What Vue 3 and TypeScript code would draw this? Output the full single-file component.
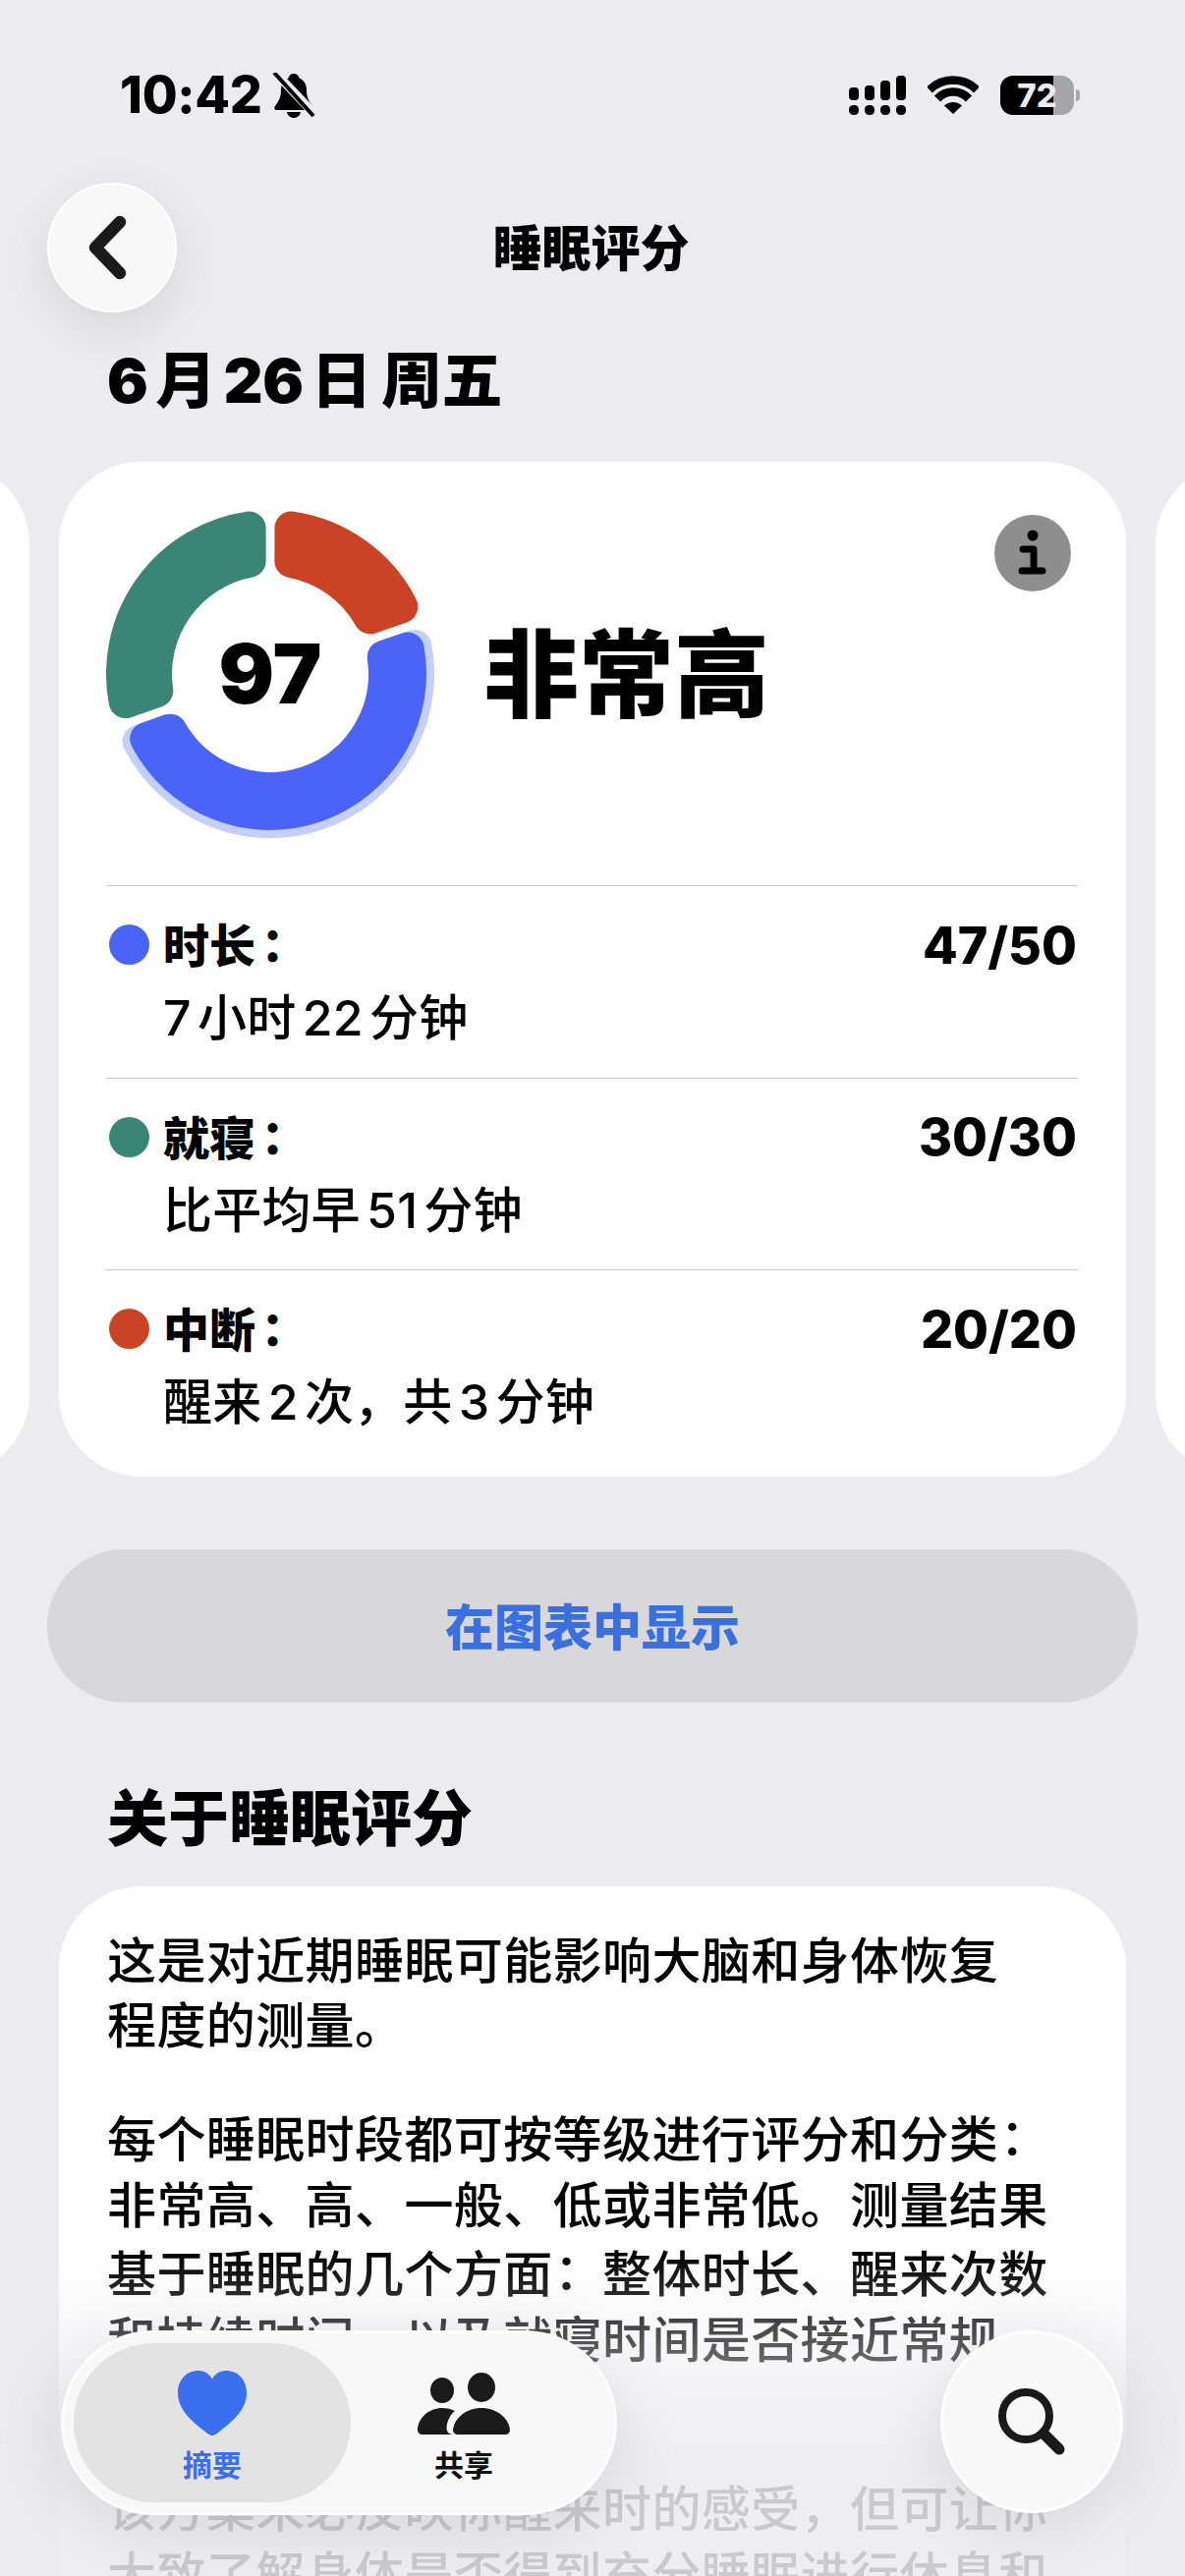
<script setup lang="ts">
import { computed } from 'vue'

interface Segment { color: string; from: number; to: number; outer: number }

const cx = 167
const cy = 167
const inner = 100
const corner = 17
const gap = 9

function polar(r: number, deg: number): string {
  const a = (deg * Math.PI) / 180
  return `${(cx + r * Math.sin(a)).toFixed(2)} ${(cy - r * Math.cos(a)).toFixed(2)}`
}

function sector(s: { from: number; to: number; outer: number }): string {
  const ro = s.outer - corner
  const ri = inner + corner
  const inset = gap / 2 + corner
  const dO = ((inset / ro) * 180) / Math.PI
  const dI = ((inset / ri) * 180) / Math.PI
  const large = s.to - s.from - dO * 2 > 180 ? 1 : 0
  return [
    `M${polar(ro, s.from + dO)}`,
    `A${ro} ${ro} 0 ${large} 1 ${polar(ro, s.to - dO)}`,
    `L${polar(ri, s.to - dI)}`,
    `A${ri} ${ri} 0 ${large} 0 ${polar(ri, s.from + dI)}`,
    'Z'
  ].join(' ')
}

const segments: Segment[] = [
  { color: '#cb4327', from: 0, to: 71, outer: 167 },
  { color: '#4a64f7', from: 71, to: 251, outer: 159 },
  { color: '#3a8575', from: 251, to: 360, outer: 167 }
]

const halo = computed(() => sector({ from: 71, to: 251, outer: 167 }))
const paths = computed(() => segments.map((s) => ({ color: s.color, d: sector(s) })))

const rows = [
  { color: '#4a64f7', label: '时长', value: '47/50', detail: '7小时22分钟' },
  { color: '#3a8575', label: '就寝', value: '30/30', detail: '比平均早51分钟' },
  { color: '#cb4327', label: '中断', value: '20/20', detail: '醒来2次，共3分钟' }
]

const signal = [
  { x: 0, y: 12, h: 13 },
  { x: 16, y: 10, h: 15 },
  { x: 32, y: 5, h: 20 },
  { x: 48, y: 0, h: 25 }
]
</script>

<template>
  <div class="page">
    <header class="status">
      <div class="status-left">
        <span class="time">10:42</span>
        <svg class="bell" width="44" height="46" viewBox="0 0 44 46">
          <path d="M22 1c3 0 5 2 5.500 4.500C32.500 7.500 35 12 35 17c0 7 1.500 11 6 17 1.500 2 .5 4-2 4H5c-2.500 0-3.500-2-2-4 4.500-6 6-10 6-17 0-5 2.500-9.500 7.500-11.500C17 3 19 1 22 1z" fill="#000" />
          <path d="M15 40h14c-.5 3.500-3.500 6-7 6s-6.500-2.500-7-6z" fill="#000" />
          <path d="M4 1 43 42" stroke="#ebebf0" stroke-width="9" />
          <path d="M2 0 42 44" stroke="#000" stroke-width="4" />
        </svg>
      </div>
      <div class="status-right">
        <svg width="58" height="40" viewBox="0 0 58 40" class="signal">
          <rect v-for="b in signal" :key="b.x" :x="b.x" :y="b.y" width="10" :height="b.h" rx="4" fill="#000" />
          <rect v-for="b in signal" :key="'d' + b.x" :x="b.x" y="30" width="10" height="10" rx="4.500" fill="#000" />
        </svg>
        <svg width="52" height="40" viewBox="0 0 52 40" class="wifi">
          <path d="M2 14.500A34 34 0 0 1 50 14.500" fill="none" stroke="#000" stroke-width="8.500" />
          <path d="M10 23.500A22 22 0 0 1 42 23.500" fill="none" stroke="#000" stroke-width="8.500" />
          <path d="M26 39 17 30.500A13 13 0 0 1 35 30.500z" fill="#000" />
        </svg>
        <div class="battery"><span>72</span></div>
        <i class="nib"></i>
      </div>
    </header>

    <nav class="nav">
      <button class="back" type="button" aria-label="返回">
        <svg width="44" height="68" viewBox="0 0 44 68">
          <path d="M34 8 9 34l25 26" fill="none" stroke="#1a1a1a" stroke-width="12.500" stroke-linecap="round" stroke-linejoin="round" />
        </svg>
      </button>
      <h1 class="title">睡眠评分</h1>
      <span></span>
    </nav>

    <h2 class="date">6月26日 周五</h2>

    <section class="carousel">
      <div class="side"></div>
      <article class="card score">
        <div class="head">
          <div class="donut">
            <svg width="334" height="334" viewBox="0 0 334 334">
              <path :d="halo" fill="#c5cffb" stroke="#c5cffb" :stroke-width="corner * 2" stroke-linejoin="round" />
              <path v-for="p in paths" :key="p.color" :d="p.d" :fill="p.color" :stroke="p.color" :stroke-width="corner * 2" stroke-linejoin="round" />
            </svg>
            <span class="num">97</span>
          </div>
          <div class="grade">非常高</div>
          <svg class="info" width="78" height="78" viewBox="0 0 78 78">
            <circle cx="39" cy="39" r="39" fill="#8e8e8e" />
            <circle cx="39" cy="21" r="5.500" fill="#000" />
            <path d="M29 35h11v21M28 57h21" fill="none" stroke="#000" stroke-width="7" stroke-linecap="round" stroke-linejoin="round" />
          </svg>
        </div>
        <div v-for="r in rows" :key="r.label" class="row">
          <i class="dot" :style="{ background: r.color }"></i>
          <div class="label">{{ r.label }}<span class="colon">：</span></div>
          <div class="value">{{ r.value }}</div>
          <div class="detail">{{ r.detail }}</div>
        </div>
      </article>
      <div class="side"></div>
    </section>

    <button class="chart" type="button">在图表中显示</button>

    <h2 class="about">关于睡眠评分</h2>

    <article class="card text">
      <p>这是对近期睡眠可能影响大脑和身体恢复<br />程度的测量。</p>
      <p>每个睡眠时段都可按等级进行评分和分类<span class="colon">：</span>非常高、高、一般、低或非常低。测量结果基于睡眠的几个方面<span class="colon">：</span>整体时长、醒来次数和持续时间，以及就寝时间是否接近常规律。</p>
      <p class="last">该方案未必反映你醒来时的感受，但可让你大致了解身体是否得到充分睡眠进行休息和恢复。</p>
    </article>

    <div class="fade"></div>

    <div class="tabbar">
      <div class="tab active">
        <svg width="70" height="66" viewBox="0 0 70 66">
          <path d="M35 66C33 66 31 64.500 27 61.500 12 50 0 38.500 0 22.500 0 9.500 8.500 0 21 0c6 0 11 3 14 8.500C38 3 43 0 49 0c12.500 0 21 9.500 21 22.500 0 16-12 27.500-27 39-4 3-6 4.500-8 4.500z" fill="#3a6fed" />
        </svg>
        <span>摘要</span>
      </div>
      <div class="tab">
        <svg width="94" height="64" viewBox="0 0 94 64">
          <ellipse cx="25" cy="19" rx="12" ry="13" fill="#1a1a1a" />
          <ellipse cx="65" cy="16" rx="14" ry="15" fill="#1a1a1a" />
          <path d="M36 64H5c-3 0-5-2-5-4.500C0 47 12 37 25 37c5 0 9 1 13 3-5 4-8 10-8.500 17-.3 3 2 7 6.500 7z" fill="#1a1a1a" />
          <path d="M41 64c-3 0-5-2-5-4.500C37 47 50 37 65 37s28 10 29 22.500c0 2.500-2 4.500-5 4.500z" fill="#1a1a1a" />
        </svg>
        <span>共享</span>
      </div>
    </div>

    <button class="search" type="button" aria-label="搜索">
      <svg width="84" height="84" viewBox="0 0 84 84">
        <circle cx="36" cy="36" r="24" fill="none" stroke="#1a1a1a" stroke-width="8" />
        <path d="M54 54 70 70" stroke="#1a1a1a" stroke-width="11" stroke-linecap="round" />
      </svg>
    </button>
  </div>
</template>

<style>
html,
body {
  margin: 0;
  background: #ebebf0;
}
</style>

<style scoped>
.page {
  position: relative;
  width: 1206px;
  height: 2622px;
  overflow: hidden;
  background: #ebebf0;
  color: #000;
  font-family: Inter, "Noto Sans CJK SC", sans-serif;
  text-autospace: normal;
}
.status {
  display: flex;
  justify-content: space-between;
  align-items: center;
  box-sizing: border-box;
  height: 186px;
  padding: 8px 107px 0 122px;
}
.status-left,
.status-right {
  display: flex;
  align-items: center;
}
.time {
  font-size: 52px;
  font-weight: 800;
  letter-spacing: -0.3px;
  line-height: 50px;
}
.bell {
  margin-left: 10px;
}
.signal {
  margin-right: 22px;
}
.wifi {
  margin-right: 22px;
}
.battery {
  display: flex;
  align-items: center;
  justify-content: center;
  width: 75px;
  height: 40px;
  border-radius: 13px;
  background: linear-gradient(90deg, #000 72%, #a5a5aa 72%);
  color: #ebebf0;
  font-size: 33px;
  font-weight: 800;
  line-height: 40px;
}
.nib {
  width: 4px;
  height: 12px;
  margin-left: 2px;
  border-radius: 0 4px 4px 0;
  background: #a5a5aa;
}
.nav {
  display: grid;
  grid-template-columns: 1fr auto 1fr;
  align-items: center;
  padding: 0 48px;
}
.back {
  display: flex;
  align-items: center;
  justify-content: center;
  box-sizing: border-box;
  width: 132px;
  height: 132px;
  padding: 0 8px 0 0;
  border: 2px solid #fff;
  border-radius: 50%;
  background: #f8f8f8;
  box-shadow: 0 16px 50px rgba(0, 0, 0, 0.09);
}
.title {
  margin: 2px 3px 0 0;
  font-size: 50px;
  font-weight: 900;
  line-height: 60px;
}
.date {
  margin: 32px 0 44px 109px;
  font-size: 62px;
  font-weight: 900;
  letter-spacing: -0.4px;
  word-spacing: -2px;
  line-height: 76px;
}
.carousel {
  display: flex;
  justify-content: center;
  gap: 30px;
}
.side {
  flex: none;
  width: 1086px;
  border-radius: 84px;
  background: #fff;
}
.card {
  flex: none;
  box-sizing: border-box;
  width: 1086px;
  border-radius: 84px;
  background: #fff;
}
.score {
  padding: 48px 49px 15px 48px;
}
.head {
  position: relative;
  display: flex;
  align-items: center;
  height: 335px;
  margin-bottom: 48px;
}
.donut {
  position: relative;
  width: 334px;
  height: 334px;
}
.donut svg {
  display: block;
}
.num {
  position: absolute;
  inset: 0;
  display: flex;
  align-items: center;
  justify-content: center;
  font-size: 84px;
  font-weight: 900;
}
.grade {
  margin: 2px 0 0 50px;
  font-size: 97px;
  font-weight: 900;
  line-height: 110px;
}
.info {
  position: absolute;
  top: 6px;
  right: 7px;
}
.row {
  display: grid;
  grid-template-columns: 55px 1fr auto;
  align-items: center;
  row-gap: 13px;
  height: 195.500px;
  box-sizing: border-box;
  padding: 28px 1px 0 3px;
  align-content: start;
  border-top: 1.500px solid #c8c8ca;
}
.dot {
  width: 41px;
  height: 41px;
  border-radius: 50%;
}
.label {
  font-size: 47px;
  font-weight: 900;
  line-height: 60px;
}
.colon {
  font-family: "Noto Sans CJK TC", sans-serif;
  margin-left: -11px;
  margin-right: 11px;
}
.label .colon {
  margin-left: -6px;
  margin-right: 0;
}
.value {
  padding-top: 2px;
  font-size: 52px;
  font-weight: 800;
  line-height: 60px;
}
.detail {
  grid-column: 2 / 4;
  font-size: 50px;
  font-weight: 500;
  letter-spacing: 0.2px;
  line-height: 60px;
}
.chart {
  display: block;
  width: 1110px;
  height: 156px;
  margin: 74px 48px 0;
  padding: 0 0 3px;
  border: 0;
  border-radius: 78px;
  background: #d8d8da;
  color: #3a6fe0;
  font-family: inherit;
  font-size: 50px;
  font-weight: 900;
}
.about {
  margin: 81px 0 30px 109px;
  font-size: 62px;
  font-weight: 900;
  line-height: 76px;
}
.text {
  width: 1086px;
  margin-left: 60px;
  padding: 43px 49px 60px;
}
.text p {
  margin: 0 0 45px;
  font-size: 50px;
  font-weight: 500;
  letter-spacing: 0.4px;
  line-height: 66.700px;
}
.text p.last {
  margin-top: -6px;
}
.fade {
  position: absolute;
  left: 0;
  right: 0;
  top: 2290px;
  bottom: 0;
  background: linear-gradient(rgba(235, 235, 240, 0), rgba(235, 235, 240, 0.86) 220px);
  pointer-events: none;
}
.tabbar {
  position: absolute;
  left: 62px;
  top: 2372px;
  display: flex;
  box-sizing: border-box;
  width: 566px;
  height: 188px;
  padding: 10px;
  border: 3px solid #fdfdfd;
  border-radius: 94px;
  background: #f8f8f8;
  box-shadow: 0 12px 70px rgba(0, 0, 0, 0.1);
}
.tab {
  display: flex;
  flex-direction: column;
  align-items: center;
  box-sizing: border-box;
  width: 282px;
  padding-top: 28px;
  color: #111;
  font-size: 30px;
  font-weight: 700;
  line-height: 36px;
  border-radius: 81px;
}
.tab span {
  margin-top: 12px;
}
.tab svg {
  display: block;
  height: 66px;
}
.tab.active {
  background: #e3e3e3;
  color: #3a6fed;
}
.tab:not(.active) {
  width: 230px;
}
.search {
  position: absolute;
  left: 957px;
  top: 2372px;
  display: flex;
  align-items: center;
  justify-content: center;
  box-sizing: border-box;
  width: 186px;
  height: 186px;
  padding: 0;
  border: 3px solid #fff;
  border-radius: 50%;
  background: #f8f8f8;
  box-shadow: 0 12px 70px rgba(0, 0, 0, 0.1);
}
</style>
